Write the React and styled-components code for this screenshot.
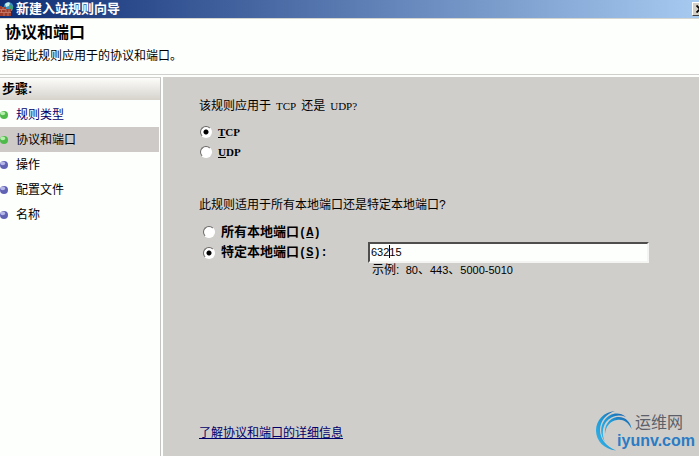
import { useState } from "react";
import styled, { createGlobalStyle } from "styled-components";

const steps = [
    { name: '规则类型', done: true, link: true },
    { name: '协议和端口', done: true, active: true },
    { name: '操作' },
    { name: '配置文件' },
    { name: '名称' },
];

export default function App() {
    const [protocol, setProtocol] = useState('tcp');
    const [scope, setScope] = useState('specific');
    const [ports, setPorts] = useState('63215');

    return (
        <>
            <GlobalStyle />
            <Wizard>
                <TitleBar>
                    <FirewallIcon />
                    <span>新建入站规则向导</span>
                    <CloseButton aria-label="关闭">
                        <svg width="8" height="8" viewBox="0 0 8 8">
                            <path d="M0.5 0.5l7 7M7.5 0.5l-7 7" stroke="#000" strokeWidth="1.8" />
                        </svg>
                    </CloseButton>
                </TitleBar>
                <Header>
                    <h1>协议和端口</h1>
                    <p>指定此规则应用于的协议和端口。</p>
                </Header>
                <Body>
                    <Sidebar>
                        <h2>步骤:</h2>
                        <ul>
                            {steps.map((step) => (
                                <Step key={step.name} $active={step.active}>
                                    <Ball done={step.done} />
                                    {step.link ? <a href="#type">{step.name}</a> : <span>{step.name}</span>}
                                </Step>
                            ))}
                        </ul>
                    </Sidebar>
                    <Content>
                        <Group>
                            <Question>该规则应用于<Latin>TCP</Latin>还是<Latin>UDP?</Latin></Question>
                            <Option>
                                <Radio name="protocol" checked={protocol === 'tcp'} onChange={() => setProtocol('tcp')} />
                                <LatinLabel><u>T</u>CP</LatinLabel>
                            </Option>
                            <Option>
                                <Radio name="protocol" checked={protocol === 'udp'} onChange={() => setProtocol('udp')} />
                                <LatinLabel><u>U</u>DP</LatinLabel>
                            </Option>
                        </Group>
                        <Group>
                            <Question>此规则适用于所有本地端口还是特定本地端口?</Question>
                            <Scope>
                                <Option>
                                    <Radio name="scope" checked={scope === 'all'} onChange={() => setScope('all')} />
                                    <span>所有本地端口<Key>(<u>A</u>)</Key></span>
                                </Option>
                                <PortRow>
                                    <Option>
                                        <Radio name="scope" checked={scope === 'specific'} onChange={() => setScope('specific')} />
                                        <span>特定本地端口<Key>(<u>S</u>):</Key></span>
                                    </Option>
                                    <Field>
                                        <PortInput
                                            aria-label="特定本地端口"
                                            value={ports}
                                            onChange={(e) => setPorts(e.target.value)}
                                        />
                                        <Caret />
                                    </Field>
                                </PortRow>
                                <Hint>示例: <Digits>&nbsp;80</Digits>、<Digits>443</Digits>、<Digits>5000-5010</Digits></Hint>
                            </Scope>
                        </Group>
                        <Footer>
                            <a href="#more">了解协议和端口的详细信息</a>
                            <Brand>
                                <Swirl />
                                <div>
                                    <strong>运维网</strong>
                                    <em>iyunv.com</em>
                                </div>
                            </Brand>
                        </Footer>
                    </Content>
                </Body>
            </Wizard>
        </>
    )
}

const FirewallIcon = () => (
    <svg width="14" height="16" viewBox="0 0 14 16">
        <circle cx="8.5" cy="6" r="4.8" fill="#3b8fc0" />
        <path d="M5 3q3-3 5-1l-1 3-3 1z" fill="#c4ece4" />
        <path d="M10 4l3 2-1 4-2-1z" fill="#3fa060" />
        <path d="M0 5h2v1h4v2h5v7H0z" fill="#a03c2c" />
        <path d="M0 8.5h6M0 11.5h11M3 6v2.500M6 8.500v3M9 8.500v3M1.500 9v2.500M4 12v3M8 12v3" stroke="#d08c7c" strokeWidth="0.7" />
    </svg>
);

const Ball = ({ done }) => (
    <svg width="8" height="10" viewBox="0 0 8 10">
        <circle cx="4" cy="5" r="4" fill={done ? '#4dba4a' : '#6062b4'} />
        <ellipse cx="2.8" cy="3.4" rx="2.4" ry="1.8" fill={done ? '#b5efac' : '#b4b6e8'} />
    </svg>
);

const Swirl = () => (
    <svg width="38" height="42" viewBox="0 0 38 42">
        <defs>
            <linearGradient id="swirl" x1="0" y1="1" x2="1" y2="0">
                <stop offset="0" stopColor="#3ab8ea" />
                <stop offset="0.5" stopColor="#1e9ad8" />
                <stop offset="1" stopColor="#1c5fa8" />
            </linearGradient>
        </defs>
        <g fill="url(#swirl)">
            <path d="M21 40.500C9 39 1 31 1 20.500C1 10 9 2 20 1C11 4 5 11 5 20C5 29 11 36 21 40.500z" />
            <path d="M10 32C5 25 5 17 9 11C14 3 24 1 31 7C23 4 16 6 11 12C7 18 7 25 10 32z" />
            <path d="M10 24C9 16 14 8 22 7C30 6 36 12 36.500 19C33 12 28 9 22 10C15 11 11 16 10 24z" />
        </g>
    </svg>
);

const GlobalStyle = createGlobalStyle`
    * {
        box-sizing: border-box;
        margin: 0;
        padding: 0;
    }
    body {
        font-family: 'Liberation Sans', 'Noto Sans CJK SC', sans-serif;
        font-size: 12px;
        line-height: 18px;
        color: #000;
        background-color: #fdfffd;
    }
    a {
        color: #00006c;
    }
`

const Wizard = styled.div`
    min-height: 100vh;
    display: flex;
    flex-direction: column;
`

const TitleBar = styled.div`
    height: 18px;
    display: flex;
    align-items: center;
    gap: 2px;
    background: linear-gradient(to right, #0e2d74, #a6caf0);
    color: #fff;
    font-size: 13px;
    font-weight: bold;
`

const CloseButton = styled.button`
    width: 16px;
    height: 14px;
    margin-left: auto;
    margin-right: -9px;
    display: flex;
    align-items: center;
    padding-left: 3px;
    background-color: #d4d0c8;
    border: 1px solid;
    border-color: #fff #404040 #404040 #fff;
`

const Header = styled.header`
    padding: 4px 2px 9px;
    border-top: 1px solid #d4d4d0;
    border-bottom: 1px solid #cfcfcb;
    h1 {
        padding-left: 3px;
        font-size: 16px;
        line-height: 20px;
    }
    p {
        padding-top: 4px;
    }
`

const Body = styled.div`
    flex: 1;
    display: flex;
    gap: 2px;
    padding-top: 2px;
`

const Sidebar = styled.nav`
    width: 161px;
    flex-shrink: 0;
    border-top: 1px solid #d0d0cc;
    border-right: 1px solid #c4c4c2;
    h2 {
        padding: 2px;
        margin-bottom: 2px;
        font-size: 13px;
        background: linear-gradient(#fcfcfa, #d6d3cc);
    }
    ul {
        list-style: none;
    }
`

const Step = styled.li`
    height: 25px;
    margin-right: 1px;
    display: flex;
    align-items: center;
    gap: 8px;
    background-color: ${props => props.$active ? '#cdcac7' : 'transparent'};
    a {
        text-decoration: none;
    }
`

const Content = styled.main`
    flex: 1;
    display: flex;
    flex-direction: column;
    padding: 20px 4px 4px 36px;
    background-color: #d0cecb;
`

const Group = styled.section`
    margin-bottom: 34px;
`

const Question = styled.p`
    margin-bottom: 7px;
`

const Latin = styled.span`
    padding: 0 5px;
    font-family: 'Liberation Serif', serif;
    font-size: 11px;
`

const Digits = styled.span`
    font-size: 11px;
`

const Option = styled.label`
    height: 20px;
    display: flex;
    align-items: center;
    gap: 6px;
    padding-left: 1px;
    font-size: 13px;
    font-weight: bold;
`

const LatinLabel = styled.span`
    font-family: 'Liberation Serif', serif;
    font-size: 11px;
`

const Key = styled.span`
    font-family: 'Liberation Mono', monospace;
    font-size: 12px;
`

const Radio = styled.input.attrs({ type: 'radio' })`
    appearance: none;
    width: 12px;
    height: 12px;
    border-radius: 50%;
    border: 1px solid;
    border-color: #6a6866 #fff #fff #6a6866;
    background: ${props => props.checked ? 'radial-gradient(circle, #000 2px, #fff 3px)' : '#fff'};
`

const Scope = styled.div`
    padding: 1px 0 0 3px;
`

const PortRow = styled.div`
    display: flex;
    align-items: center;
    padding-right: 46px;
    ${Option} {
        width: 166px;
        flex-shrink: 0;
    }
`

const Field = styled.div`
    position: relative;
    flex: 1;
    height: 21px;
`

const PortInput = styled.input`
    width: 100%;
    height: 21px;
    padding: 0 1px 2px;
    font-family: 'Liberation Sans', sans-serif;
    font-size: 11px;
    background-color: #fdfffd;
    border: 2px solid;
    border-color: #504e4c #f4f4f2 #f4f4f2 #504e4c;
    outline: none;
`

const Caret = styled.i`
    position: absolute;
    top: 3px;
    left: 21px;
    width: 1px;
    height: 13px;
    background-color: #000;
`

const Hint = styled.p`
    padding-left: 170px;
    line-height: 14px;
`

const Footer = styled.footer`
    margin-top: auto;
    display: flex;
    justify-content: space-between;
    align-items: center;
    a {
        padding-top: 4px;
    }
`

const Brand = styled.div`
    display: flex;
    div {
        display: flex;
        flex-direction: column;
        margin-left: -16px;
        padding-top: 4px;
    }
    strong {
        padding-left: 18px;
        font-size: 16px;
        font-weight: normal;
        color: #5c6068;
    }
    em {
        font-family: 'Liberation Sans', sans-serif;
        font-size: 16px;
        font-style: normal;
        font-weight: bold;
        color: #2a7cc4;
    }
`
